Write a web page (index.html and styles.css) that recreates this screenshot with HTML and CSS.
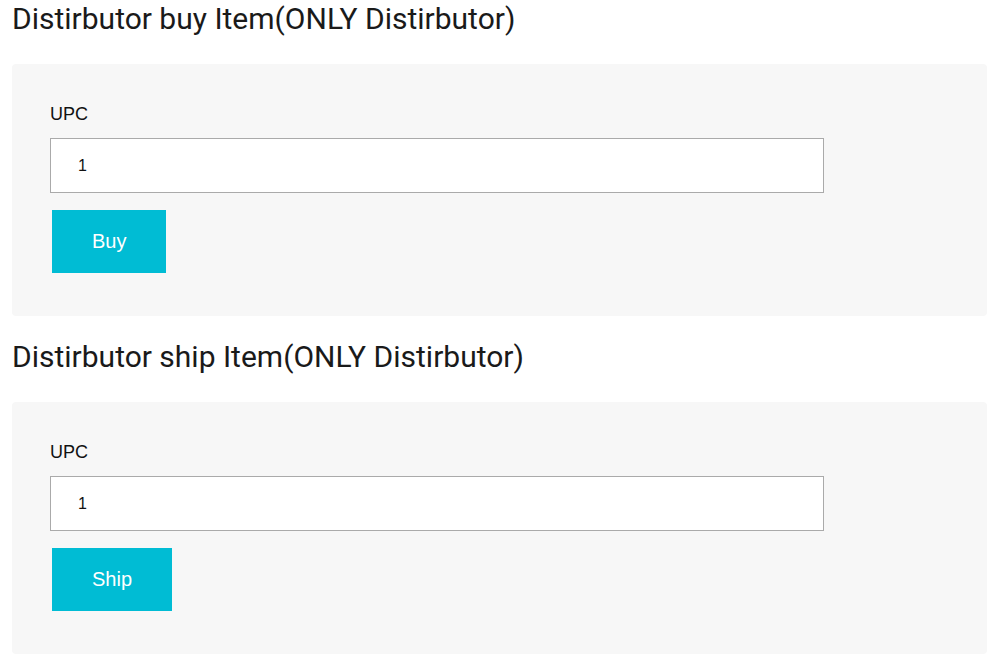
FILE: index.html
```html
<!DOCTYPE html>
<html>
<head>
<meta charset="utf-8">
<link rel="stylesheet" href="styles.css">
</head>
<body>
<section class="block">
  <h2 class="title">Distirbutor buy Item(ONLY Distirbutor)</h2>
  <div class="panel">
    <label class="label" for="upc1">UPC</label>
    <input class="field" id="upc1" type="text" value="1">
    <button class="btn">Buy</button>
  </div>
</section>
<section class="block">
  <h2 class="title">Distirbutor ship Item(ONLY Distirbutor)</h2>
  <div class="panel">
    <label class="label" for="upc2">UPC</label>
    <input class="field" id="upc2" type="text" value="1">
    <button class="btn">Ship</button>
  </div>
</section>
</body>
</html>
```
FILE: styles.css
```css
html, body {
  margin: 0;
  padding: 0;
  background: #ffffff;
}
body {
  padding: 0 11px 0 12px;
  font-family: "Liberation Sans", Arial, sans-serif;
}
.block {
  display: flex;
  flex-direction: column;
}
.title {
  margin: 1px 0 0 0;
  font-family: Roboto, "Liberation Sans", sans-serif;
  font-weight: 400;
  font-size: 30px;
  line-height: 36px;
  color: #1a1a1a;
}
.panel {
  margin-top: 27px;
  margin-bottom: 22px;
  background: #f7f7f7;
  border-radius: 4px;
  padding: 38px 38px 43px 38px;
  display: flex;
  flex-direction: column;
  align-items: flex-start;
}
.label {
  font-size: 18px;
  line-height: 24px;
  color: #111111;
  margin-bottom: 12px;
}
.field {
  box-sizing: border-box;
  width: 774px;
  height: 55px;
  border: 1px solid #aaaaaa;
  background: #ffffff;
  padding: 0 27px;
  font-family: "Liberation Sans", Arial, sans-serif;
  font-size: 16px;
  color: #111111;
  outline: none;
  margin: 0;
}
.btn {
  margin: 17px 0 0 2px;
  border: 0;
  background: #00bcd4;
  color: #ffffff;
  font-family: "Liberation Sans", Arial, sans-serif;
  font-size: 20px;
  line-height: 23px;
  padding: 20px 40px;
  cursor: pointer;
}
```
